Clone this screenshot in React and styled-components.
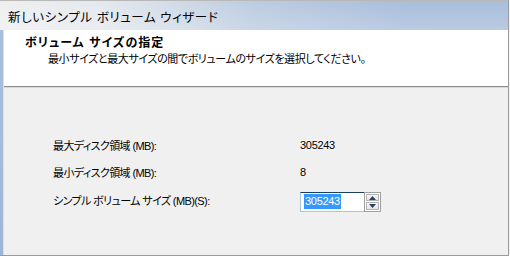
import styled, { createGlobalStyle } from "styled-components";

const GlobalStyle = createGlobalStyle`
  html, body {
    margin: 0;
    padding: 0;
    background: #ffffff;
  }
  body {
    font-family: "Liberation Sans", "Noto Sans CJK JP", sans-serif;
    font-size: 12px;
    color: #000;
  }
`;

const Window = styled.div`
  width: 508px;
  height: 256px;
  display: flex;
  flex-direction: column;
  border-right: 1px solid #9a9a9a;
  box-shadow: 0 2px 3px rgba(0, 0, 0, 0.12);
  font-feature-settings: "palt";
`;

const TitleBar = styled.div`
  border-top: 1px solid #b8b8b8;
  display: flex;
  align-items: center;
  padding: 1px 0 0 8px;
  box-sizing: border-box;
  height: 30px;
  font-size: 12.5px;
  letter-spacing: 0.6px;
  background:
    linear-gradient(180deg, rgba(255, 255, 255, 0.05) 0%, rgba(255, 255, 255, 0.25) 100%),
    linear-gradient(90deg, #eeeeee 0%, #e3e7ec 20%, #b8c9df 50%, #a3bad9 80%, #a3bad8 100%);
`;

const Frame = styled.div`
  flex: 1;
  display: flex;
  border-bottom: 1px solid #9a9a9a;
`;

const SideStrip = styled.div`
  width: 3px;
  background: linear-gradient(180deg, #a9bfdb 0%, #9eb6d6 100%);
  border-right: 1px solid #d8e2ee;
`;

const Content = styled.div`
  flex: 1;
  display: flex;
  flex-direction: column;
`;

const Header = styled.div`
  height: 57px;
  background: #ffffff;
  border-bottom: 1px solid #8c8c8c;
  padding: 5px 0 0 21px;
  box-sizing: border-box;
`;

const HeaderTitle = styled.div`
  font-weight: bold;
  font-size: 12px;
  line-height: 16px;
  letter-spacing: 1px;
`;

const HeaderSub = styled.div`
  padding-left: 23px;
  line-height: 16px;
  font-size: 11px;
  letter-spacing: -0.4px;
`;

const Body = styled.div`
  flex: 1;
  background: #f0f0f0;
  border-top: 1px solid #d9d9d9;
  padding: 43px 0 0 49px;
`;

const Grid = styled.div`
  display: grid;
  grid-template-columns: 247px auto;
  grid-auto-rows: 27.5px;
  align-items: center;
`;

const Label = styled.div`
  white-space: nowrap;
  font-size: 11px;
  letter-spacing: -0.6px;
`;

const Value = styled.div`
  font-family: "Liberation Sans", sans-serif;
  font-size: 11px;
  letter-spacing: -0.3px;
`;

const Spin = styled.div`
  display: flex;
  width: 81px;
  height: 20px;
  margin-top: 4px;
`;

const SpinInput = styled.div`
  flex: 1;
  background: #fff;
  border-top: 1px solid #1c3f5e;
  border-left: 1px solid #a9c6de;
  border-bottom: 1px solid #a9c6de;
  display: flex;
  align-items: center;
  padding-left: 3px;
`;

const Selected = styled.span`
  background: #3399ff;
  color: #fff;
  font-family: "Liberation Sans", sans-serif;
  font-size: 11px;
  letter-spacing: -0.3px;
  line-height: 15px;
  padding: 0 1px;
`;

const SpinButtons = styled.div`
  width: 17px;
  border: 1px solid #a0a0a0;
  background: #fff;
  display: flex;
  flex-direction: column;
  gap: 1px;
  padding: 1px;
  box-sizing: border-box;
`;

const SpinBtn = styled.div`
  flex: 1;
  border: 1px solid #b4b4b4;
  background: linear-gradient(180deg, #f6f6f6, #e4e4e4);
  display: flex;
  align-items: center;
  justify-content: center;
`;

const Arrow = ({ down }) => (
  <svg width="7" height="4" viewBox="0 0 7 4">
    <polygon
      points={down ? "0,0 7,0 3.5,4" : "0,4 7,4 3.5,0"}
      fill="#2d3d6a"
    />
  </svg>
);

export default function App() {
  return (
    <>
      <GlobalStyle />
      <Window>
        <TitleBar>新しいシンプル ボリューム ウィザード</TitleBar>
        <Frame>
          <SideStrip />
          <Content>
            <Header>
              <HeaderTitle>ボリューム サイズの指定</HeaderTitle>
              <HeaderSub>
                最小サイズと最大サイズの間でボリュームのサイズを選択してください。
              </HeaderSub>
            </Header>
            <Body>
              <Grid>
                <Label>最大ディスク領域 (MB):</Label>
                <Value>305243</Value>
                <Label>最小ディスク領域 (MB):</Label>
                <Value>8</Value>
                <Label>シンプル ボリューム サイズ (MB)(S):</Label>
                <Spin>
                  <SpinInput>
                    <Selected>305243</Selected>
                  </SpinInput>
                  <SpinButtons>
                    <SpinBtn>
                      <Arrow />
                    </SpinBtn>
                    <SpinBtn>
                      <Arrow down />
                    </SpinBtn>
                  </SpinButtons>
                </Spin>
              </Grid>
            </Body>
          </Content>
        </Frame>
      </Window>
    </>
  );
}
